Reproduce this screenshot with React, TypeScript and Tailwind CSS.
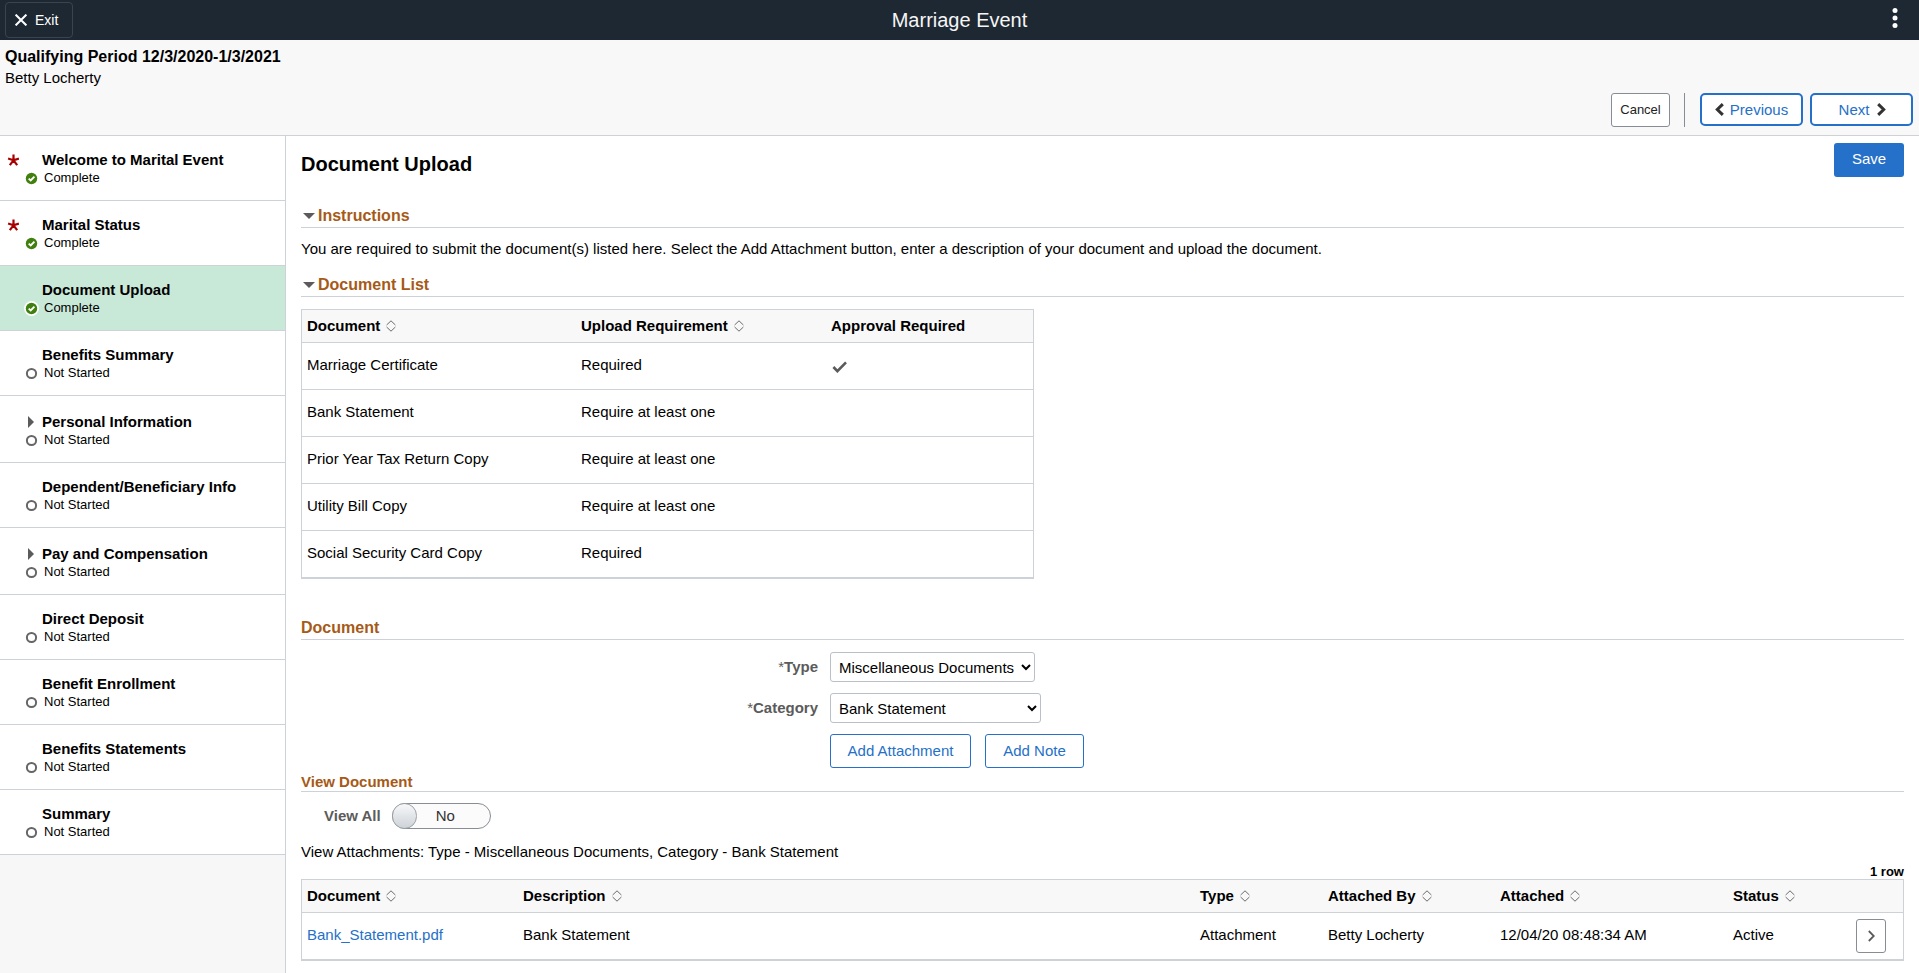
import React from "react";

type Step = {
  title: string;
  status: "Complete" | "Not Started";
  required?: boolean;
  active?: boolean;
  group?: boolean;
};

const steps: Step[] = [
  { title: "Welcome to Marital Event", status: "Complete", required: true },
  { title: "Marital Status", status: "Complete", required: true },
  { title: "Document Upload", status: "Complete", active: true },
  { title: "Benefits Summary", status: "Not Started" },
  { title: "Personal Information", status: "Not Started", group: true },
  { title: "Dependent/Beneficiary Info", status: "Not Started" },
  { title: "Pay and Compensation", status: "Not Started", group: true },
  { title: "Direct Deposit", status: "Not Started" },
  { title: "Benefit Enrollment", status: "Not Started" },
  { title: "Benefits Statements", status: "Not Started" },
  { title: "Summary", status: "Not Started" },
];

const requiredDocs = [
  { name: "Marriage Certificate", requirement: "Required", approval: true },
  { name: "Bank Statement", requirement: "Require at least one", approval: false },
  { name: "Prior Year Tax Return Copy", requirement: "Require at least one", approval: false },
  { name: "Utility Bill Copy", requirement: "Require at least one", approval: false },
  { name: "Social Security Card Copy", requirement: "Required", approval: false },
];

function RequiredMark() {
  return (
    <svg viewBox="0 0 12 12" className="h-3 w-3" fill="none" stroke="#a80000" strokeWidth="2.2" aria-label="Required" role="img">
      <path d="M6.5 6.3V.6M6.5 6.3L1.1 4.5M6.5 6.3l5.4-1.8M6.5 6.3L2.8 11.2M6.5 6.3l3.7 4.9" />
    </svg>
  );
}

function StatusIcon({ done, active }: { done: boolean; active?: boolean }) {
  if (done) {
    return (
      <svg viewBox="0 0 15 15" className="h-[15px] w-[15px]" aria-hidden="true">
        {active && <circle cx="7.5" cy="7.5" r="7.4" fill="#fff" />}
        <circle cx="7.5" cy="7.5" r="5.7" fill="#41800f" />
        <path d="M4.7 7.6l2 1.9 3.7-3.8" fill="none" stroke="#fff" strokeWidth="1.9" />
      </svg>
    );
  }
  return (
    <svg viewBox="0 0 15 15" className="h-[15px] w-[15px]" aria-hidden="true">
      <circle cx="7.5" cy="7.5" r="4.6" fill="#fff" stroke="#666" strokeWidth="2" />
    </svg>
  );
}

function SortIcon() {
  return (
    <svg viewBox="0 0 10 12" className="h-3 w-[10px]" fill="none" stroke="#6b6b6b" strokeWidth="1" aria-hidden="true">
      <path d="M.6 5L5 .8 9.4 5M.6 7L5 11.2 9.4 7" />
    </svg>
  );
}

function HeaderCell({ label, width, sortable = true }: { label: string; width: string; sortable?: boolean }) {
  return (
    <th scope="col" className={`h-[33px] border-b border-[#cdd2d9] bg-[#f8f8f8] p-0 pl-[5px] text-left font-bold ${width}`}>
      {sortable ? (
        <button type="button" className="flex items-center gap-[6px] font-bold">
          {label}
          <SortIcon />
        </button>
      ) : (
        label
      )}
    </th>
  );
}

function Cell({ children }: { children?: React.ReactNode }) {
  return <td className="h-[47px] border-b border-[#cdd2d9] p-0 pb-[2px] pl-[5px] align-middle">{children}</td>;
}

function SectionHeading({ children, collapsible }: { children: string; collapsible?: boolean }) {
  return (
    <h2 className="border-b border-[#cdd2d9] pb-[1px] text-base leading-5 font-bold text-[#a65a17]">
      {collapsible ? (
        <button type="button" aria-expanded="true" className="flex items-center gap-[3px] pl-[2px] font-bold">
          <svg viewBox="0 0 12 6" className="h-[6px] w-3" fill="#5b5b5b" aria-hidden="true">
            <path d="M0 0h12L6 6z" />
          </svg>
          {children}
        </button>
      ) : (
        children
      )}
    </h2>
  );
}

function StepItem({ step }: { step: Step }) {
  return (
    <li
      className={`border-b border-[#cdd2d9] pb-[13px] ${step.active ? "bg-[#c9e9d8]" : "bg-white"} ${
        step.group ? "pt-4" : "pt-[14px]"
      }`}
    >
      <a href="#step" aria-current={step.active ? "step" : undefined} className="grid grid-cols-[16px_16px_1fr] pl-[7px]">
        <span className="flex items-center">{step.required && <RequiredMark />}</span>
        <span className="flex items-center justify-center">
          {step.group && (
            <svg viewBox="0 0 6 12" className="h-3 w-[6px]" fill="#5b5b5b" aria-hidden="true">
              <path d="M0 0l6 6-6 6z" />
            </svg>
          )}
        </span>
        <span className="pl-[3px] text-[15px] leading-[19px] font-bold">{step.title}</span>
        <span />
        <span className="flex items-center pl-[1px]">
          <StatusIcon done={step.status === "Complete"} active={step.active} />
        </span>
        <span className="pl-[5px] text-[13px] leading-[18px]">{step.status}</span>
      </a>
    </li>
  );
}

export default function App() {
  return (
    <div className="flex min-h-screen flex-col bg-white font-['Liberation_Sans',Arial,sans-serif] text-[15px] leading-[18px] text-black">
      <header className="grid h-10 grid-cols-[1fr_auto_1fr] items-center bg-[#1e2833] text-white">
        <div className="pl-[5px]">
          <button type="button" className="flex h-9 w-[68px] items-center gap-2 rounded border border-[#3a444e] pl-[9px] text-sm">
            <svg viewBox="0 0 12 12" className="h-3 w-3" fill="none" stroke="#fff" strokeWidth="2" aria-hidden="true">
              <path d="M.6.6l10.8 10.8M11.4.6L.6 11.4" />
            </svg>
            Exit
          </button>
        </div>
        <h1 className="text-xl leading-6 text-[#f5f5f5]">Marriage Event</h1>
        <div className="flex justify-end self-start pt-[6px] pr-5">
          <button type="button" aria-label="Actions" className="flex h-6 w-[7px] items-center">
            <svg viewBox="0 0 6 20" className="h-5 w-[6px]" fill="#fff" aria-hidden="true">
              <circle cx="3" cy="2.6" r="2.5" />
              <circle cx="3" cy="10" r="2.5" />
              <circle cx="3" cy="17.4" r="2.5" />
            </svg>
          </button>
        </div>
      </header>

      <section className="border-b border-[#cfd1d4] bg-[#f8f8f8] pt-[7px] pb-2">
        <div className="pl-[5px]">
          <p className="text-base leading-5 font-bold">Qualifying Period 12/3/2020-1/3/2021</p>
          <p className="pt-[2px]">Betty Locherty</p>
        </div>
        <div className="flex items-start justify-end gap-[7px] pt-[6px] pr-[6px]">
          <button type="button" className="h-[34px] w-[59px] rounded-[3px] border border-[#868d95] bg-white text-[13px] text-[#222]">
            Cancel
          </button>
          <span className="mr-2 ml-[7px] h-[34px] w-px bg-[#868d95]" />
          <button
            type="button"
            className="flex h-[33px] w-[103px] items-center justify-center gap-[6px] rounded-[5px] border-2 border-[#2570c8] bg-white text-[#2570c8]"
          >
            <svg viewBox="0 0 9 13" className="h-[13px] w-[9px]" fill="none" stroke="#333" strokeWidth="3" aria-hidden="true">
              <path d="M7.8 1.1L2.3 6.5l5.5 5.4" />
            </svg>
            Previous
          </button>
          <button
            type="button"
            className="flex h-[33px] w-[103px] items-center justify-center gap-2 rounded-[5px] border-2 border-[#2570c8] bg-white pl-[2px] text-[#2570c8]"
          >
            Next
            <svg viewBox="0 0 9 13" className="h-[13px] w-[9px]" fill="none" stroke="#333" strokeWidth="3" aria-hidden="true">
              <path d="M1.2 1.1l5.5 5.4-5.5 5.4" />
            </svg>
          </button>
        </div>
      </section>

      <div className="flex flex-1">
        <nav aria-label="Steps" className="w-[286px] shrink-0 border-r border-[#cdd2d9] bg-[#f7f7f7]">
          <ul>
            {steps.map((step) => (
              <StepItem key={step.title} step={step} />
            ))}
          </ul>
        </nav>

        <main className="min-w-0 flex-1 pt-[7px] pr-[15px] pl-[15px]">
          <div className="flex items-start justify-between">
            <h2 className="pt-[9px] text-xl leading-6 font-bold">Document Upload</h2>
            <button type="button" className="h-[34px] w-[70px] rounded-[3px] bg-[#2570c8] pb-[2px] text-white">
              Save
            </button>
          </div>

          <div className="pt-[29px]">
            <SectionHeading collapsible>Instructions</SectionHeading>
            <p className="pt-3 pb-[10px]">
              You are required to submit the document(s) listed here. Select the Add Attachment button, enter a description of your
              document and upload the document.
            </p>
          </div>

          <div className="pt-[7px]">
            <SectionHeading collapsible>Document List</SectionHeading>
            <table className="mt-3 w-[733px] table-fixed border-separate border-spacing-0 border border-[#cdd2d9]">
              <thead>
                <tr>
                  <HeaderCell label="Document" width="w-[274px]" />
                  <HeaderCell label="Upload Requirement" width="w-[250px]" />
                  <HeaderCell label="Approval Required" width="w-auto" sortable={false} />
                </tr>
              </thead>
              <tbody>
                {requiredDocs.map((doc) => (
                  <tr key={doc.name}>
                    <Cell>{doc.name}</Cell>
                    <Cell>{doc.requirement}</Cell>
                    <Cell>
                      {doc.approval && (
                        <svg viewBox="0 0 15 12" className="mt-1 ml-[1px] h-3 w-[15px]" fill="none" stroke="#5b5b5b" strokeWidth="2.6" role="img" aria-label="Yes">
                          <path d="M1.4 6l4 4.2L14 1.4" />
                        </svg>
                      )}
                    </Cell>
                  </tr>
                ))}
              </tbody>
            </table>
          </div>

          <div className="pt-[39px]">
            <SectionHeading>Document</SectionHeading>
            <div className="grid grid-cols-[517px_1fr] items-center gap-x-3 gap-y-[11px] pt-3">
              <label htmlFor="doc-type" className="text-right font-bold text-[#5b5b5b]">
                <span className="font-normal">*</span>Type
              </label>
              <div className="flex">
                <select id="doc-type" className="h-[30px] w-[205px] rounded-[3px] border border-[#b9c0c9] bg-white pl-1">
                  <option>Miscellaneous Documents</option>
                </select>
              </div>
              <label htmlFor="doc-category" className="text-right font-bold text-[#5b5b5b]">
                <span className="font-normal">*</span>Category
              </label>
              <div className="flex">
                <select id="doc-category" className="h-[30px] w-[211px] rounded-[3px] border border-[#b9c0c9] bg-white pl-1">
                  <option>Bank Statement</option>
                </select>
              </div>
              <div className="col-start-2 flex gap-[14px]">
                <button type="button" className="h-[34px] w-[141px] rounded-[3px] border border-[#2570c8] bg-white text-[#2570c8]">
                  Add Attachment
                </button>
                <button type="button" className="h-[34px] w-[99px] rounded-[3px] border border-[#2570c8] bg-white text-[#2570c8]">
                  Add Note
                </button>
              </div>
            </div>
          </div>

          <h3 className="border-b border-[#cdd2d9] pt-1 text-[15px] leading-[19px] font-bold text-[#a65a17]">View Document</h3>
          <div className="flex items-center gap-[11px] pt-[11px] pl-[23px]">
            <label htmlFor="view-all" className="font-bold text-[#5b5b5b]">
              View All
            </label>
            <label className="flex h-[26px] w-[99px] items-center rounded-full border border-[#868d95] bg-[#fbfbfb] text-[#333]">
              <input id="view-all" type="checkbox" role="switch" className="sr-only" />
              <span className="-ml-px h-[26px] w-[25px] rounded-full border border-[#9aa1a9] bg-linear-to-b from-[#f7f8f9] to-[#ced3d8]" />
              <span className="flex-1 pl-[19px]">No</span>
            </label>
          </div>
          <p className="pt-[14px]">View Attachments: Type - Miscellaneous Documents, Category - Bank Statement</p>
          <p className="pt-[3px] text-right text-[13px] leading-[15px] font-bold">1 row</p>
          <table className="w-full table-fixed border-separate border-spacing-0 border border-[#cdd2d9]">
            <thead>
              <tr>
                <HeaderCell label="Document" width="w-[216px]" />
                <HeaderCell label="Description" width="w-auto" />
                <HeaderCell label="Type" width="w-[128px]" />
                <HeaderCell label="Attached By" width="w-[172px]" />
                <HeaderCell label="Attached" width="w-[233px]" />
                <HeaderCell label="Status" width="w-[123px]" />
                <th scope="col" aria-label="Details" className="w-[52px] border-b border-[#cdd2d9] bg-[#f8f8f8]" />
              </tr>
            </thead>
            <tbody>
              <tr>
                <Cell>
                  <a href="#bank-statement" className="text-[#2570c8]">
                    Bank_Statement.pdf
                  </a>
                </Cell>
                <Cell>Bank Statement</Cell>
                <Cell>Attachment</Cell>
                <Cell>Betty Locherty</Cell>
                <Cell>12/04/20 08:48:34 AM</Cell>
                <Cell>Active</Cell>
                <Cell>
                  <button
                    type="button"
                    aria-label="View details"
                    className="mt-[2px] flex h-[34px] w-[30px] items-center justify-center rounded-[3px] border border-[#868d95] bg-white"
                  >
                    <svg viewBox="0 0 7 12" className="h-3 w-[7px]" fill="none" stroke="#5b5b5b" strokeWidth="1.8" aria-hidden="true">
                      <path d="M.8 1l5 5-5 5" />
                    </svg>
                  </button>
                </Cell>
              </tr>
            </tbody>
          </table>
        </main>
      </div>
    </div>
  );
}
